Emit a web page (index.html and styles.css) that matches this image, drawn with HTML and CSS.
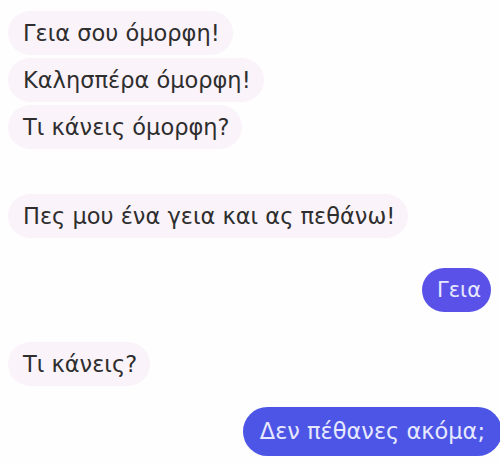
FILE: index.html
```html
<!DOCTYPE html>
<html lang="el">
<head>
  <meta charset="UTF-8" />
  <title>Chat</title>
  <link rel="stylesheet" href="styles.css">
</head>
<body>
  <div class="chat">
    <div class="msg in">Γεια σου όμορφη!</div>
    <div class="msg in">Καλησπέρα όμορφη!</div>
    <div class="msg in">Τι κάνεις όμορφη?</div>
    <div class="msg in gap-big">Πες μου ένα γεια και ας πεθάνω!</div>
    <div class="msg out short gap-mid">Γεια</div>
    <div class="msg in gap-mid">Τι κάνεις?</div>
    <div class="msg out last gap-small">Δεν πέθανες ακόμα;</div>
  </div>
</body>
</html>
```

FILE: styles.css
```css
body {
  margin: 0;
  background: #fefefe;
  font-family: "DejaVu Sans", "Noto Sans", sans-serif;
  overflow: hidden;
}

.chat {
  display: flex;
  flex-direction: column;
  gap: 3px;
  padding: 11px 9px 0 8px;
}

.msg {
  font-size: 22.5px;
  line-height: 26px;
  padding: 9px 13px 9px 15px;
  border-radius: 22px;
  width: fit-content;
}

.in {
  background: #fbf3fa;
  color: #2e2e2e;
}

.out {
  align-self: flex-end;
  background: #5a52e8;
  color: #e6e8ff;
}

.short {
  padding: 9px 10px 9px 15px;
  font-size: 21px;
}

.last {
  background: #4c55e6;
  padding: 11px 17px 12px 17px;
  border-radius: 25px;
  margin-right: -11px;
}

.gap-big {
  margin-top: 42px;
}

.gap-mid {
  margin-top: 27px;
}

.gap-small {
  margin-top: 18px;
}
```
